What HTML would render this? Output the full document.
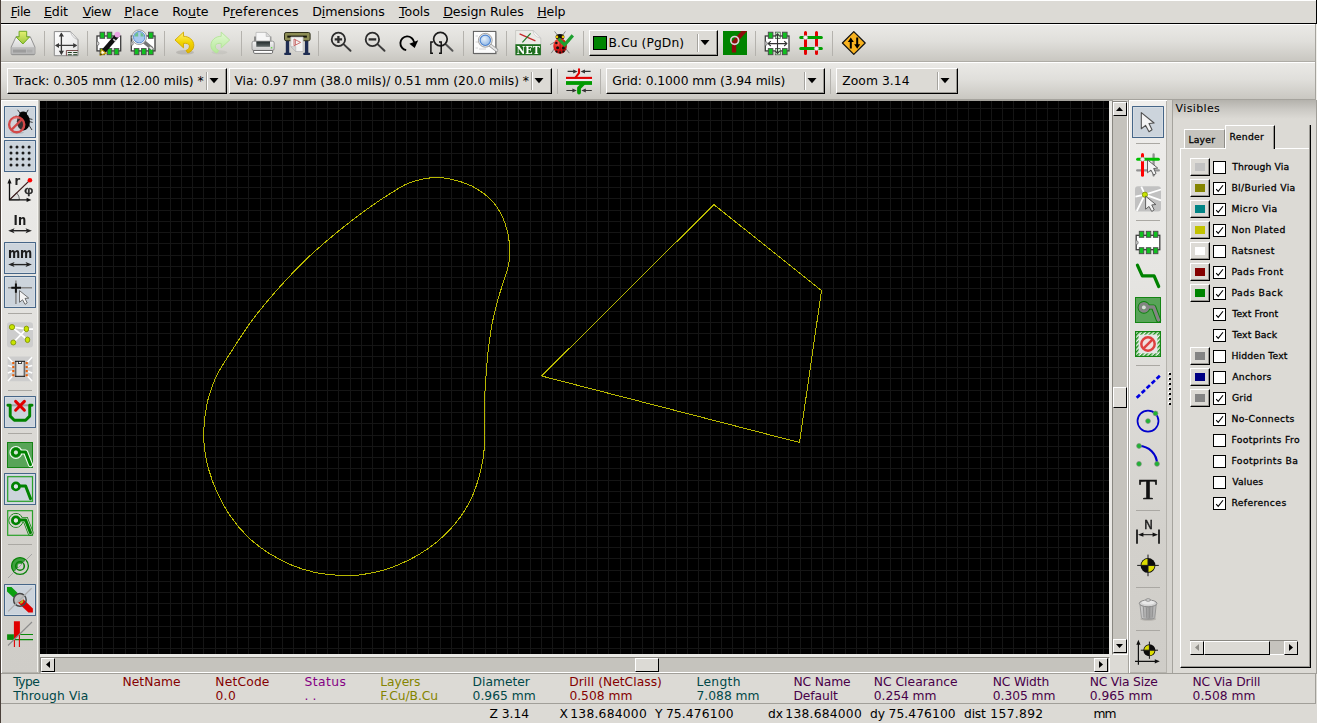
<!DOCTYPE html>
<html><head><meta charset="utf-8"><title>Pcbnew</title>
<style>
html,body{margin:0;padding:0}
body{width:1317px;height:723px;overflow:hidden;background:#dcdad5;position:relative;
 font-family:"DejaVu Sans","Liberation Sans",sans-serif;font-size:12px;color:#000}
div{position:absolute;box-sizing:border-box}
svg{position:absolute;overflow:visible}
.t{white-space:pre;line-height:1;}
.btn{background:#dcdad5;border-top:1px solid #fff;border-left:1px solid #fff;border-right:1px solid #000;border-bottom:1px solid #000}
.tog{background:#ccd4dc;border:1px solid #466688;border-radius:0.6px;box-shadow:inset 0 0 0 1px #d5dce3}
.sep{background:#b0aea9}
u{text-decoration:underline}
</style></head>
<body>
<div style="left:0px;top:0px;width:1317px;height:1px;background:#fff"></div>
<div style="left:0px;top:23px;width:1317px;height:1px;background:#000"></div>
<div style="left:1316px;top:0px;width:1px;height:24px;background:#000"></div>
<div style="left:1px;top:24px;width:1314px;height:1px;background:#fff"></div>
<div style="left:1px;top:25px;width:1314px;height:36px;background:linear-gradient(#eae9e6,#e0dfdb 45%,#c9c7c1)"></div>
<div style="left:1px;top:61px;width:1314px;height:1px;background:#aeaca6"></div>
<div style="left:1px;top:62px;width:1314px;height:1px;background:#fff"></div>
<div style="left:1px;top:63px;width:1314px;height:36px;background:linear-gradient(#eae9e6,#e0dfdb 45%,#c9c7c1)"></div>
<div style="left:1px;top:99px;width:1314px;height:1px;background:#a5a39d"></div>
<div style="left:1315px;top:24px;width:1px;height:76px;background:#a5a39d"></div>
<div style="left:1316px;top:24px;width:1px;height:76px;background:#efeeea"></div>
<div style="left:1px;top:100px;width:37px;height:1px;background:#fff"></div>
<div style="left:1px;top:101px;width:1px;height:572px;background:#fff"></div>
<div style="left:2px;top:101px;width:35px;height:571px;background:linear-gradient(#efeeec,#e6e5e2 30%,#d3d1cc 75%,#cfcdc8)"></div>
<div style="left:37px;top:101px;width:1px;height:571px;background:#f3f2ee"></div>
<div style="left:2px;top:672px;width:36px;height:1px;background:#b5b3ad"></div>
<div style="left:38px;top:100px;width:1px;height:573px;background:#c2c0ba"></div>
<div style="left:39px;top:100px;width:1px;height:573px;background:#a19f99"></div>
<div style="left:39px;top:100px;width:1074px;height:1px;background:#a5a39d"></div>
<div style="left:1109px;top:101px;width:3px;height:556px;background:#e9e8e4"></div>
<div style="left:40px;top:654px;width:1072px;height:3px;background:#e9e8e4"></div>
<div style="left:1112px;top:101px;width:16px;height:554px;background:#c5c3bd;border-left:1px solid #8a8882;border-top:1px solid #8a8882;border-right:1px solid #fff;border-bottom:1px solid #fff"></div>
<div class="btn" style="left:1113px;top:102px;width:14px;height:14px;"></div>
<div class="btn" style="left:1113px;top:639px;width:14px;height:14px;"></div>
<div class="btn" style="left:1113px;top:387px;width:14px;height:21px;"></div>
<svg style="left:1113px;top:102px" width="14" height="14"><path d="M3 9 L6.5 5 L10 9Z" fill="#000"/></svg>
<svg style="left:1113px;top:639px" width="14" height="14"><path d="M3 5 L6.5 9 L10 5Z" fill="#000"/></svg>
<div style="left:40px;top:657px;width:1070px;height:16px;background:#c5c3bd;border-left:1px solid #8a8882;border-top:1px solid #8a8882;border-right:1px solid #fff;border-bottom:1px solid #fff"></div>
<div class="btn" style="left:41px;top:658px;width:14px;height:14px;"></div>
<div class="btn" style="left:1094px;top:658px;width:14px;height:14px;"></div>
<div class="btn" style="left:635px;top:658px;width:24px;height:14px;"></div>
<svg style="left:41px;top:658px" width="14" height="14"><path d="M9 3 L5 6.5 L9 10Z" fill="#000"/></svg>
<svg style="left:1094px;top:658px" width="14" height="14"><path d="M5 3 L9 6.5 L5 10Z" fill="#000"/></svg>
<div style="left:1110px;top:655px;width:19px;height:18px;background:#dcdad5"></div>
<div style="left:1128px;top:100px;width:1px;height:573px;background:#a5a39d"></div>
<div style="left:1129px;top:100px;width:38px;height:1px;background:#fff"></div>
<div style="left:1129px;top:101px;width:1px;height:572px;background:#fff"></div>
<div style="left:1130px;top:101px;width:36px;height:571px;background:linear-gradient(#efeeec,#e6e5e2 30%,#d3d1cc 75%,#cfcdc8)"></div>
<div style="left:1166px;top:101px;width:1px;height:571px;background:#b5b3ad"></div>
<div style="left:1130px;top:672px;width:37px;height:1px;background:#b5b3ad"></div>
<div style="left:1167px;top:100px;width:5px;height:573px;background:#d6d4cf"></div>
<div style="left:1172px;top:100px;width:1px;height:573px;background:#a5a39d"></div>
<div style="left:1168px;top:372px;width:2px;height:2px;background:#fff"></div>
<div style="left:1169px;top:373px;width:2px;height:2px;background:#000"></div>
<div style="left:1168px;top:377px;width:2px;height:2px;background:#fff"></div>
<div style="left:1169px;top:378px;width:2px;height:2px;background:#000"></div>
<div style="left:1168px;top:382px;width:2px;height:2px;background:#fff"></div>
<div style="left:1169px;top:383px;width:2px;height:2px;background:#000"></div>
<div style="left:1168px;top:387px;width:2px;height:2px;background:#fff"></div>
<div style="left:1169px;top:388px;width:2px;height:2px;background:#000"></div>
<div style="left:1168px;top:392px;width:2px;height:2px;background:#fff"></div>
<div style="left:1169px;top:393px;width:2px;height:2px;background:#000"></div>
<div style="left:1168px;top:397px;width:2px;height:2px;background:#fff"></div>
<div style="left:1169px;top:398px;width:2px;height:2px;background:#000"></div>
<div style="left:1168px;top:402px;width:2px;height:2px;background:#fff"></div>
<div style="left:1169px;top:403px;width:2px;height:2px;background:#000"></div>
<div style="left:1px;top:673px;width:1315px;height:1px;background:#a19f99"></div>
<div style="left:1px;top:674px;width:1315px;height:30px;background:#dcdad5;border-right:1px solid #a19f99;border-bottom:1px solid #a19f99"></div>
<div style="left:0px;top:0px;width:1px;height:723px;background:#4a403a"></div>
<div style="left:1316px;top:100px;width:1px;height:574px;background:#a19f99"></div>
<svg style="left:40px;top:101px;background:#000;overflow:hidden" width="1069" height="553" viewBox="0 0 1069 553"><path d="M6.5 0V553M17.5 0V553M28.5 0V553M40.5 0V553M51.5 0V553M62.5 0V553M73.5 0V553M85.5 0V553M96.5 0V553M107.5 0V553M118.5 0V553M130.5 0V553M141.5 0V553M152.5 0V553M163.5 0V553M175.5 0V553M186.5 0V553M197.5 0V553M208.5 0V553M220.5 0V553M231.5 0V553M242.5 0V553M253.5 0V553M265.5 0V553M276.5 0V553M287.5 0V553M298.5 0V553M310.5 0V553M321.5 0V553M332.5 0V553M343.5 0V553M355.5 0V553M366.5 0V553M377.5 0V553M388.5 0V553M400.5 0V553M411.5 0V553M422.5 0V553M433.5 0V553M445.5 0V553M456.5 0V553M467.5 0V553M478.5 0V553M490.5 0V553M501.5 0V553M512.5 0V553M523.5 0V553M535.5 0V553M546.5 0V553M557.5 0V553M568.5 0V553M580.5 0V553M591.5 0V553M602.5 0V553M613.5 0V553M625.5 0V553M636.5 0V553M647.5 0V553M658.5 0V553M670.5 0V553M681.5 0V553M692.5 0V553M703.5 0V553M715.5 0V553M726.5 0V553M737.5 0V553M748.5 0V553M760.5 0V553M771.5 0V553M782.5 0V553M793.5 0V553M805.5 0V553M816.5 0V553M827.5 0V553M838.5 0V553M850.5 0V553M861.5 0V553M872.5 0V553M883.5 0V553M895.5 0V553M906.5 0V553M917.5 0V553M928.5 0V553M940.5 0V553M951.5 0V553M962.5 0V553M973.5 0V553M985.5 0V553M996.5 0V553M1007.5 0V553M1018.5 0V553M1030.5 0V553M1041.5 0V553M1052.5 0V553M1063.5 0V553M0 7.5H1069M0 19.5H1069M0 30.5H1069M0 41.5H1069M0 52.5H1069M0 64.5H1069M0 75.5H1069M0 86.5H1069M0 97.5H1069M0 109.5H1069M0 120.5H1069M0 131.5H1069M0 142.5H1069M0 154.5H1069M0 165.5H1069M0 176.5H1069M0 187.5H1069M0 199.5H1069M0 210.5H1069M0 221.5H1069M0 232.5H1069M0 244.5H1069M0 255.5H1069M0 266.5H1069M0 277.5H1069M0 289.5H1069M0 300.5H1069M0 311.5H1069M0 322.5H1069M0 334.5H1069M0 345.5H1069M0 356.5H1069M0 367.5H1069M0 379.5H1069M0 390.5H1069M0 401.5H1069M0 412.5H1069M0 424.5H1069M0 435.5H1069M0 446.5H1069M0 457.5H1069M0 469.5H1069M0 480.5H1069M0 491.5H1069M0 502.5H1069M0 514.5H1069M0 525.5H1069M0 536.5H1069M0 547.5H1069" stroke="#151515" stroke-width="1" fill="none" shape-rendering="crispEdges"/><polygon points="673.9,103.6 781.5,189.6 759.5,341.5 501.6,275.0" fill="none" stroke="#b8b800" stroke-width="1" shape-rendering="crispEdges"/><path d="M396.8 76.5C405.5 76.5 415.6 79.1 422.9 81.4C430.2 83.7 435.1 86.5 440.4 90.1C445.7 93.7 450.8 97.9 454.9 103.2C459.0 108.5 462.6 115.6 465.0 122.1C467.4 128.6 468.8 135.6 469.4 142.4C470.0 149.2 469.8 156.4 468.8 162.7C467.8 169.0 465.4 174.1 463.6 180.1C461.8 186.2 459.7 192.2 457.8 199.0C455.9 205.8 454.1 212.8 452.5 220.8C450.9 228.8 449.6 238.2 448.5 246.9C447.4 255.6 446.8 264.5 446.2 273.0C445.6 281.5 444.9 287.5 444.7 298.0C444.4 308.5 444.9 326.1 444.7 335.8C444.5 345.5 444.3 349.3 443.3 356.1C442.3 362.9 440.8 369.6 438.9 376.4C436.9 383.2 434.8 390.1 431.6 396.8C428.5 403.5 424.4 410.3 420.0 416.4C415.6 422.5 410.8 428.0 405.5 433.2C400.2 438.4 394.4 443.2 388.1 447.6C381.8 452.0 375.1 456.1 367.8 459.6C360.5 463.1 352.2 466.5 344.5 468.9C336.8 471.2 327.1 472.8 321.3 473.7C315.6 474.6 313.9 474.3 310.0 474.4C306.1 474.5 303.9 474.8 298.0 474.3C292.1 473.8 282.6 473.1 274.9 471.4C267.2 469.7 259.4 467.4 251.6 464.1C243.9 460.9 235.7 456.6 228.4 451.9C221.1 447.2 214.3 442.0 208.0 436.0C201.7 430.0 195.8 422.9 190.7 415.6C185.6 408.3 181.2 400.1 177.6 392.4C174.0 384.7 171.1 376.7 168.9 369.2C166.7 361.7 165.3 354.4 164.5 347.4C163.7 340.4 163.5 334.3 163.9 327.0C164.3 319.7 165.5 310.6 166.8 303.8C168.1 297.0 169.9 291.8 171.8 286.4C173.7 281.0 174.7 278.1 178.3 271.5C181.9 264.9 188.2 255.3 193.6 246.9C199.0 238.4 205.2 228.8 211.0 220.8C216.8 212.8 222.6 205.9 228.4 199.0C234.2 192.1 239.5 186.1 245.8 179.3C252.1 172.5 259.3 164.9 266.1 158.4C272.9 151.9 279.7 145.9 286.5 140.1C293.3 134.3 299.6 129.2 306.8 123.5C314.1 117.8 322.2 111.6 330.0 106.1C337.8 100.6 346.5 94.8 353.3 90.7C360.1 86.6 363.4 83.8 370.7 81.4C377.9 79.0 388.1 76.5 396.8 76.5Z" fill="none" stroke="#b8b800" stroke-width="1" shape-rendering="crispEdges"/></svg>
<svg width="0" height="0" style="left:0;top:0"><defs>
<linearGradient id="gDisk" x1="0" y1="0" x2="0" y2="1"><stop offset="0" stop-color="#f4f4f4"/><stop offset="1" stop-color="#c4c4c4"/></linearGradient>
<linearGradient id="gArr" x1="0" y1="0" x2="0" y2="1"><stop offset="0" stop-color="#e4f070"/><stop offset="1" stop-color="#9cc83c"/></linearGradient>
<linearGradient id="gUndo" x1="0" y1="0" x2="0" y2="1"><stop offset="0" stop-color="#fff27a"/><stop offset="0.5" stop-color="#f2d400"/><stop offset="1" stop-color="#e0b400"/></linearGradient>
<linearGradient id="gRedo" x1="0" y1="0" x2="0" y2="1"><stop offset="0" stop-color="#e2f8d4"/><stop offset="1" stop-color="#b4e898"/></linearGradient>
<linearGradient id="gPage" x1="0" y1="0" x2="1" y2="1"><stop offset="0" stop-color="#ffffff"/><stop offset="1" stop-color="#e4e4e4"/></linearGradient>
<radialGradient id="gLens" cx="0.4" cy="0.35" r="0.7"><stop offset="0" stop-color="#e8f2fc"/><stop offset="1" stop-color="#8cb4e4"/></radialGradient>
<radialGradient id="gBug" cx="0.35" cy="0.3" r="0.8"><stop offset="0" stop-color="#ff6050"/><stop offset="0.5" stop-color="#e01818"/><stop offset="1" stop-color="#900808"/></radialGradient>
<linearGradient id="gPrn" x1="0" y1="0" x2="0" y2="1"><stop offset="0" stop-color="#f6f6f6"/><stop offset="1" stop-color="#c8c8c8"/></linearGradient>
<linearGradient id="gSlot" x1="0" y1="0" x2="0" y2="1"><stop offset="0" stop-color="#20282a"/><stop offset="1" stop-color="#606868"/></linearGradient>
<linearGradient id="gCan" x1="0" y1="0" x2="1" y2="0"><stop offset="0" stop-color="#d4d4d4"/><stop offset="0.55" stop-color="#9a9a9a"/><stop offset="1" stop-color="#c2c2c2"/></linearGradient>
</defs></svg>
<div style="left:7px;top:68px;width:220px;height:26px;background:#dcdad5;border-top:1px solid #fff;border-left:1px solid #fff;border-right:1px solid #000;border-bottom:1px solid #000;box-shadow:inset -1px -1px 0 #9a9893"></div>
<div style="left:206px;top:72px;width:1px;height:18px;background:#a5a39e"></div>
<div style="left:207px;top:72px;width:1px;height:18px;background:#fff"></div>
<svg style="left:209px;top:78px" width="10" height="6"><path d="M0.5 0 H9.5 L5 5.2Z" fill="#000"/></svg>
<div style="left:229px;top:68px;width:323px;height:26px;background:#dcdad5;border-top:1px solid #fff;border-left:1px solid #fff;border-right:1px solid #000;border-bottom:1px solid #000;box-shadow:inset -1px -1px 0 #9a9893"></div>
<div style="left:531px;top:72px;width:1px;height:18px;background:#a5a39e"></div>
<div style="left:532px;top:72px;width:1px;height:18px;background:#fff"></div>
<svg style="left:534px;top:78px" width="10" height="6"><path d="M0.5 0 H9.5 L5 5.2Z" fill="#000"/></svg>
<div style="left:589px;top:30px;width:129px;height:26px;background:#dcdad5;border-top:1px solid #fff;border-left:1px solid #fff;border-right:1px solid #000;border-bottom:1px solid #000;box-shadow:inset -1px -1px 0 #9a9893"></div>
<div style="left:697px;top:34px;width:1px;height:18px;background:#a5a39e"></div>
<div style="left:698px;top:34px;width:1px;height:18px;background:#fff"></div>
<svg style="left:700px;top:40px" width="10" height="6"><path d="M0.5 0 H9.5 L5 5.2Z" fill="#000"/></svg>
<div style="left:606px;top:68px;width:219px;height:26px;background:#dcdad5;border-top:1px solid #fff;border-left:1px solid #fff;border-right:1px solid #000;border-bottom:1px solid #000;box-shadow:inset -1px -1px 0 #9a9893"></div>
<div style="left:804px;top:72px;width:1px;height:18px;background:#a5a39e"></div>
<div style="left:805px;top:72px;width:1px;height:18px;background:#fff"></div>
<svg style="left:807px;top:78px" width="10" height="6"><path d="M0.5 0 H9.5 L5 5.2Z" fill="#000"/></svg>
<div style="left:836px;top:68px;width:122px;height:26px;background:#dcdad5;border-top:1px solid #fff;border-left:1px solid #fff;border-right:1px solid #000;border-bottom:1px solid #000;box-shadow:inset -1px -1px 0 #9a9893"></div>
<div style="left:937px;top:72px;width:1px;height:18px;background:#a5a39e"></div>
<div style="left:938px;top:72px;width:1px;height:18px;background:#fff"></div>
<svg style="left:940px;top:78px" width="10" height="6"><path d="M0.5 0 H9.5 L5 5.2Z" fill="#000"/></svg>
<div style="left:593px;top:36px;width:14px;height:14px;background:#008400;border:1px solid #000"></div>
<div style="left:44px;top:31px;width:1px;height:25px;background:#b4b2ad"></div>
<div style="left:87px;top:31px;width:1px;height:25px;background:#b4b2ad"></div>
<div style="left:164px;top:31px;width:1px;height:25px;background:#b4b2ad"></div>
<div style="left:241px;top:31px;width:1px;height:25px;background:#b4b2ad"></div>
<div style="left:318px;top:31px;width:1px;height:25px;background:#b4b2ad"></div>
<div style="left:463px;top:31px;width:1px;height:25px;background:#b4b2ad"></div>
<div style="left:506px;top:31px;width:1px;height:25px;background:#b4b2ad"></div>
<div style="left:583px;top:31px;width:1px;height:25px;background:#b4b2ad"></div>
<div style="left:755px;top:31px;width:1px;height:25px;background:#b4b2ad"></div>
<div style="left:832px;top:31px;width:1px;height:25px;background:#b4b2ad"></div>
<div style="left:557px;top:69px;width:1px;height:25px;background:#b4b2ad"></div>
<div style="left:600px;top:69px;width:1px;height:25px;background:#b4b2ad"></div>
<div style="left:830px;top:69px;width:1px;height:25px;background:#b4b2ad"></div>
<div style="left:1173px;top:100px;width:143px;height:19px;background:linear-gradient(#b4b2ac,#cbc9c4 50%,#dcdad5)"></div>
<div style="left:1180px;top:148px;width:131px;height:520px;background:#dcdad5;border-left:1px solid #fff;border-top:1px solid #fff;border-right:1px solid #000;border-bottom:1px solid #000;box-shadow:inset -1px -1px 0 #9a9893"></div>
<div style="left:1310px;top:125px;width:1px;height:24px;background:#000"></div>
<div style="left:1309px;top:125px;width:1px;height:24px;background:#9a9893"></div>
<div style="left:1184px;top:129px;width:41px;height:19px;background:#c5c3bd;border-left:1px solid #fff;border-top:1px solid #fff;border-right:1px solid #8f8d88"></div>
<div style="left:1225px;top:125px;width:50px;height:24px;background:#dcdad5;border-left:1px solid #fff;border-top:1px solid #fff;border-right:1px solid #000;box-shadow:inset -1px 0 0 #9a9893"></div>
<div style="left:1190px;top:158px;width:20px;height:18px;background:#dcdad5;border-left:1px solid #fff;border-top:1px solid #fff;border-right:1px solid #000;border-bottom:1px solid #000;box-shadow:inset -1px -1px 0 #9a9893"></div>
<div style="left:1195px;top:163px;width:10px;height:8px;background:#c2c2c2"></div>
<div style="left:1213px;top:161px;width:13px;height:13px;background:#fff;border:1px solid #000"></div>
<div style="left:1190px;top:179px;width:20px;height:18px;background:#dcdad5;border-left:1px solid #fff;border-top:1px solid #fff;border-right:1px solid #000;border-bottom:1px solid #000;box-shadow:inset -1px -1px 0 #9a9893"></div>
<div style="left:1195px;top:184px;width:10px;height:8px;background:#848400"></div>
<div style="left:1213px;top:182px;width:13px;height:13px;background:#fff;border:1px solid #000"></div>
<svg style="left:1213px;top:182px" width="13" height="13"><path d="M3.2 7.2 L5.2 9.4 L10 3.2" fill="none" stroke="#000" stroke-width="1.05"/></svg>
<div style="left:1190px;top:200px;width:20px;height:18px;background:#dcdad5;border-left:1px solid #fff;border-top:1px solid #fff;border-right:1px solid #000;border-bottom:1px solid #000;box-shadow:inset -1px -1px 0 #9a9893"></div>
<div style="left:1195px;top:205px;width:10px;height:8px;background:#008484"></div>
<div style="left:1213px;top:203px;width:13px;height:13px;background:#fff;border:1px solid #000"></div>
<svg style="left:1213px;top:203px" width="13" height="13"><path d="M3.2 7.2 L5.2 9.4 L10 3.2" fill="none" stroke="#000" stroke-width="1.05"/></svg>
<div style="left:1190px;top:221px;width:20px;height:18px;background:#dcdad5;border-left:1px solid #fff;border-top:1px solid #fff;border-right:1px solid #000;border-bottom:1px solid #000;box-shadow:inset -1px -1px 0 #9a9893"></div>
<div style="left:1195px;top:226px;width:10px;height:8px;background:#c2c200"></div>
<div style="left:1213px;top:224px;width:13px;height:13px;background:#fff;border:1px solid #000"></div>
<svg style="left:1213px;top:224px" width="13" height="13"><path d="M3.2 7.2 L5.2 9.4 L10 3.2" fill="none" stroke="#000" stroke-width="1.05"/></svg>
<div style="left:1190px;top:242px;width:20px;height:18px;background:#dcdad5;border-left:1px solid #fff;border-top:1px solid #fff;border-right:1px solid #000;border-bottom:1px solid #000;box-shadow:inset -1px -1px 0 #9a9893"></div>
<div style="left:1195px;top:247px;width:10px;height:8px;background:#ffffff"></div>
<div style="left:1213px;top:245px;width:13px;height:13px;background:#fff;border:1px solid #000"></div>
<div style="left:1190px;top:263px;width:20px;height:18px;background:#dcdad5;border-left:1px solid #fff;border-top:1px solid #fff;border-right:1px solid #000;border-bottom:1px solid #000;box-shadow:inset -1px -1px 0 #9a9893"></div>
<div style="left:1195px;top:268px;width:10px;height:8px;background:#840000"></div>
<div style="left:1213px;top:266px;width:13px;height:13px;background:#fff;border:1px solid #000"></div>
<svg style="left:1213px;top:266px" width="13" height="13"><path d="M3.2 7.2 L5.2 9.4 L10 3.2" fill="none" stroke="#000" stroke-width="1.05"/></svg>
<div style="left:1190px;top:284px;width:20px;height:18px;background:#dcdad5;border-left:1px solid #fff;border-top:1px solid #fff;border-right:1px solid #000;border-bottom:1px solid #000;box-shadow:inset -1px -1px 0 #9a9893"></div>
<div style="left:1195px;top:289px;width:10px;height:8px;background:#008400"></div>
<div style="left:1213px;top:287px;width:13px;height:13px;background:#fff;border:1px solid #000"></div>
<svg style="left:1213px;top:287px" width="13" height="13"><path d="M3.2 7.2 L5.2 9.4 L10 3.2" fill="none" stroke="#000" stroke-width="1.05"/></svg>
<div style="left:1213px;top:308px;width:13px;height:13px;background:#fff;border:1px solid #000"></div>
<svg style="left:1213px;top:308px" width="13" height="13"><path d="M3.2 7.2 L5.2 9.4 L10 3.2" fill="none" stroke="#000" stroke-width="1.05"/></svg>
<div style="left:1213px;top:329px;width:13px;height:13px;background:#fff;border:1px solid #000"></div>
<svg style="left:1213px;top:329px" width="13" height="13"><path d="M3.2 7.2 L5.2 9.4 L10 3.2" fill="none" stroke="#000" stroke-width="1.05"/></svg>
<div style="left:1190px;top:347px;width:20px;height:18px;background:#dcdad5;border-left:1px solid #fff;border-top:1px solid #fff;border-right:1px solid #000;border-bottom:1px solid #000;box-shadow:inset -1px -1px 0 #9a9893"></div>
<div style="left:1195px;top:352px;width:10px;height:8px;background:#848484"></div>
<div style="left:1213px;top:350px;width:13px;height:13px;background:#fff;border:1px solid #000"></div>
<div style="left:1190px;top:368px;width:20px;height:18px;background:#dcdad5;border-left:1px solid #fff;border-top:1px solid #fff;border-right:1px solid #000;border-bottom:1px solid #000;box-shadow:inset -1px -1px 0 #9a9893"></div>
<div style="left:1195px;top:373px;width:10px;height:8px;background:#000084"></div>
<div style="left:1213px;top:371px;width:13px;height:13px;background:#fff;border:1px solid #000"></div>
<div style="left:1190px;top:389px;width:20px;height:18px;background:#dcdad5;border-left:1px solid #fff;border-top:1px solid #fff;border-right:1px solid #000;border-bottom:1px solid #000;box-shadow:inset -1px -1px 0 #9a9893"></div>
<div style="left:1195px;top:394px;width:10px;height:8px;background:#848484"></div>
<div style="left:1213px;top:392px;width:13px;height:13px;background:#fff;border:1px solid #000"></div>
<svg style="left:1213px;top:392px" width="13" height="13"><path d="M3.2 7.2 L5.2 9.4 L10 3.2" fill="none" stroke="#000" stroke-width="1.05"/></svg>
<div style="left:1213px;top:413px;width:13px;height:13px;background:#fff;border:1px solid #000"></div>
<svg style="left:1213px;top:413px" width="13" height="13"><path d="M3.2 7.2 L5.2 9.4 L10 3.2" fill="none" stroke="#000" stroke-width="1.05"/></svg>
<div style="left:1213px;top:434px;width:13px;height:13px;background:#fff;border:1px solid #000"></div>
<div style="left:1213px;top:455px;width:13px;height:13px;background:#fff;border:1px solid #000"></div>
<div style="left:1213px;top:476px;width:13px;height:13px;background:#fff;border:1px solid #000"></div>
<div style="left:1213px;top:497px;width:13px;height:13px;background:#fff;border:1px solid #000"></div>
<svg style="left:1213px;top:497px" width="13" height="13"><path d="M3.2 7.2 L5.2 9.4 L10 3.2" fill="none" stroke="#000" stroke-width="1.05"/></svg>
<div style="left:1190px;top:640px;width:108px;height:15px;background:#c5c3bd;border-top:1px solid #8a8882;border-left:1px solid #8a8882;border-bottom:1px solid #fff;border-right:1px solid #fff"></div>
<div class="btn" style="left:1190px;top:641px;width:14px;height:14px;"></div>
<div class="btn" style="left:1284px;top:641px;width:14px;height:14px;"></div>
<div class="btn" style="left:1204px;top:641px;width:66px;height:14px;"></div>
<svg style="left:1190px;top:641px" width="14" height="14"><path d="M9 3 L5 6.5 L9 10Z" fill="#8f8d88"/></svg>
<svg style="left:1284px;top:641px" width="14" height="14"><path d="M5 3 L9 6.5 L5 10Z" fill="#000"/></svg>
<div class="tog" style="left:4px;top:106px;width:32px;height:32px;"></div>
<div class="tog" style="left:4px;top:140px;width:32px;height:32px;"></div>
<div class="tog" style="left:4px;top:242px;width:32px;height:32px;"></div>
<div class="tog" style="left:4px;top:276px;width:32px;height:32px;"></div>
<div class="tog" style="left:4px;top:396px;width:32px;height:32px;"></div>
<div class="tog" style="left:4px;top:473px;width:32px;height:32px;"></div>
<div class="tog" style="left:4px;top:584px;width:32px;height:32px;"></div>
<div style="left:8px;top:313px;width:24px;height:1px;background:#aaa8a3"></div>
<div style="left:8px;top:390px;width:24px;height:1px;background:#aaa8a3"></div>
<div style="left:8px;top:433px;width:24px;height:1px;background:#aaa8a3"></div>
<div style="left:8px;top:544px;width:24px;height:1px;background:#aaa8a3"></div>
<div class="tog" style="left:1132px;top:106px;width:32px;height:32px;"></div>
<div style="left:1136px;top:143px;width:24px;height:1px;background:#aaa8a3"></div>
<div style="left:1136px;top:220px;width:24px;height:1px;background:#aaa8a3"></div>
<div style="left:1136px;top:365px;width:24px;height:1px;background:#aaa8a3"></div>
<div style="left:1136px;top:510px;width:24px;height:1px;background:#aaa8a3"></div>
<div style="left:1136px;top:587px;width:24px;height:1px;background:#aaa8a3"></div>
<div style="left:1136px;top:630px;width:24px;height:1px;background:#aaa8a3"></div>
<div class="t" style="left:10.70px;top:6.34px;font-size:12.6px;color:#000;letter-spacing:-0.307px;"><u>F</u>ile</div>
<div class="t" style="left:44.00px;top:6.34px;font-size:12.6px;color:#000;letter-spacing:-0.115px;"><u>E</u>dit</div>
<div class="t" style="left:82.73px;top:6.34px;font-size:12.6px;color:#000;letter-spacing:-0.360px;"><u>V</u>iew</div>
<div class="t" style="left:124.19px;top:6.34px;font-size:12.6px;color:#000;letter-spacing:0.276px;"><u>P</u>lace</div>
<div class="t" style="left:172.20px;top:6.34px;font-size:12.6px;color:#000;letter-spacing:-0.049px;">Ro<u>u</u>te</div>
<div class="t" style="left:222.40px;top:6.34px;font-size:12.6px;color:#000;letter-spacing:0.214px;">P<u>r</u>eferences</div>
<div class="t" style="left:312.29px;top:6.34px;font-size:12.6px;color:#000;letter-spacing:-0.122px;">D<u>i</u>mensions</div>
<div class="t" style="left:398.90px;top:6.34px;font-size:12.6px;color:#000;letter-spacing:-0.016px;"><u>T</u>ools</div>
<div class="t" style="left:443.19px;top:6.34px;font-size:12.6px;color:#000;letter-spacing:-0.081px;"><u>D</u>esign Rules</div>
<div class="t" style="left:537.19px;top:6.34px;font-size:12.6px;color:#000;letter-spacing:-0.098px;"><u>H</u>elp</div>
<div class="t" style="left:13.20px;top:74.59px;font-size:12.3px;color:#000;letter-spacing:-0.024px;">Track: 0.305 mm (12.00 mils) *</div>
<div class="t" style="left:234.42px;top:74.59px;font-size:12.3px;color:#000;letter-spacing:-0.026px;">Via: 0.97 mm (38.0 mils)/ 0.51 mm (20.0 mils) *</div>
<div class="t" style="left:608.61px;top:36.59px;font-size:12.3px;color:#000;letter-spacing:0.075px;">B.Cu (PgDn)</div>
<div class="t" style="left:612.26px;top:74.59px;font-size:12.3px;color:#000;letter-spacing:-0.062px;">Grid: 0.1000 mm (3.94 mils)</div>
<div class="t" style="left:842.24px;top:74.59px;font-size:12.3px;color:#000;letter-spacing:0.064px;">Zoom 3.14</div>
<div class="t" style="left:13.20px;top:675.59px;font-size:12.3px;color:#004848;letter-spacing:-0.497px;">Type</div>
<div class="t" style="left:13.20px;top:689.59px;font-size:12.3px;color:#004848;letter-spacing:0.100px;">Through Via</div>
<div class="t" style="left:122.51px;top:675.59px;font-size:12.3px;color:#840000;letter-spacing:0.037px;">NetName</div>
<div class="t" style="left:215.31px;top:675.59px;font-size:12.3px;color:#840000;letter-spacing:0.179px;">NetCode</div>
<div class="t" style="left:215.40px;top:689.59px;font-size:12.3px;color:#840000;letter-spacing:0.382px;">0.0</div>
<div class="t" style="left:304.60px;top:675.59px;font-size:12.3px;color:#840084;letter-spacing:0.404px;">Status</div>
<div class="t" style="left:304.39px;top:689.59px;font-size:12.3px;color:#840084;letter-spacing:0.185px;">. .</div>
<div class="t" style="left:380.31px;top:675.59px;font-size:12.3px;color:#848400;letter-spacing:-0.102px;">Layers</div>
<div class="t" style="left:380.31px;top:689.59px;font-size:12.3px;color:#848400;letter-spacing:-0.048px;">F.Cu/B.Cu</div>
<div class="t" style="left:472.51px;top:675.59px;font-size:12.3px;color:#004848;">Diameter</div>
<div class="t" style="left:472.60px;top:689.59px;font-size:12.3px;color:#004848;">0.965 mm</div>
<div class="t" style="left:569.31px;top:675.59px;font-size:12.3px;color:#840000;letter-spacing:0.025px;">Drill (NetClass)</div>
<div class="t" style="left:569.40px;top:689.59px;font-size:12.3px;color:#840000;">0.508 mm</div>
<div class="t" style="left:696.41px;top:675.59px;font-size:12.3px;color:#004848;letter-spacing:0.348px;">Length</div>
<div class="t" style="left:696.50px;top:689.59px;font-size:12.3px;color:#004848;">7.088 mm</div>
<div class="t" style="left:793.51px;top:675.59px;font-size:12.3px;color:#480048;letter-spacing:-0.154px;">NC Name</div>
<div class="t" style="left:793.51px;top:689.59px;font-size:12.3px;color:#480048;letter-spacing:-0.098px;">Default</div>
<div class="t" style="left:873.71px;top:675.59px;font-size:12.3px;color:#480048;letter-spacing:0.035px;">NC Clearance</div>
<div class="t" style="left:873.80px;top:689.59px;font-size:12.3px;color:#480048;letter-spacing:-0.057px;">0.254 mm</div>
<div class="t" style="left:992.71px;top:675.59px;font-size:12.3px;color:#480048;letter-spacing:-0.120px;">NC Width</div>
<div class="t" style="left:992.80px;top:689.59px;font-size:12.3px;color:#480048;letter-spacing:-0.057px;">0.305 mm</div>
<div class="t" style="left:1089.71px;top:675.59px;font-size:12.3px;color:#480048;letter-spacing:-0.188px;">NC Via Size</div>
<div class="t" style="left:1089.80px;top:689.59px;font-size:12.3px;color:#480048;letter-spacing:-0.071px;">0.965 mm</div>
<div class="t" style="left:1192.51px;top:675.59px;font-size:12.3px;color:#480048;letter-spacing:-0.143px;">NC Via Drill</div>
<div class="t" style="left:1192.60px;top:689.59px;font-size:12.3px;color:#480048;letter-spacing:-0.029px;">0.508 mm</div>
<div class="t" style="left:489.54px;top:707.59px;font-size:12.3px;color:#000;letter-spacing:-0.038px;">Z 3.14</div>
<div class="t" style="left:559.40px;top:707.59px;font-size:12.3px;color:#000;">X</div>
<div class="t" style="left:570.25px;top:707.59px;font-size:12.3px;color:#000;letter-spacing:0.242px;">138.684000</div>
<div class="t" style="left:654.99px;top:707.59px;font-size:12.3px;color:#000;">Y</div>
<div class="t" style="left:665.90px;top:707.59px;font-size:12.3px;color:#000;letter-spacing:0.133px;">75.476100</div>
<div class="t" style="left:768.07px;top:707.59px;font-size:12.3px;color:#000;">dx</div>
<div class="t" style="left:785.34px;top:707.59px;font-size:12.3px;color:#000;letter-spacing:0.231px;">138.684000</div>
<div class="t" style="left:869.97px;top:707.59px;font-size:12.3px;color:#000;">dy</div>
<div class="t" style="left:888.50px;top:707.59px;font-size:12.3px;color:#000;letter-spacing:0.083px;">75.476100</div>
<div class="t" style="left:964.07px;top:707.59px;font-size:12.3px;color:#000;letter-spacing:-0.218px;">dist</div>
<div class="t" style="left:990.34px;top:707.59px;font-size:12.3px;color:#000;letter-spacing:0.335px;">157.892</div>
<div class="t" style="left:1093.50px;top:707.59px;font-size:12.3px;color:#000;letter-spacing:-1.100px;">mm</div>
<div class="t" style="left:1175.62px;top:102.69px;font-size:11px;color:#000;letter-spacing:0.351px;">Visibles</div>
<div class="t" style="left:1188.40px;top:135.17px;font-size:9.25px;color:#000;letter-spacing:0.196px;-webkit-text-stroke:0.27px #000;">Layer</div>
<div class="t" style="left:1229.50px;top:132.17px;font-size:9.25px;color:#000;letter-spacing:0.296px;-webkit-text-stroke:0.27px #000;">Render</div>
<div class="t" style="left:1232.27px;top:162.17px;font-size:9.25px;color:#000;letter-spacing:0.119px;-webkit-text-stroke:0.27px #000;">Through Via</div>
<div class="t" style="left:1231.40px;top:183.17px;font-size:9.25px;color:#000;letter-spacing:0.368px;-webkit-text-stroke:0.27px #000;">Bl/Buried Via</div>
<div class="t" style="left:1231.40px;top:204.17px;font-size:9.25px;color:#000;letter-spacing:0.446px;-webkit-text-stroke:0.27px #000;">Micro Via</div>
<div class="t" style="left:1231.40px;top:225.17px;font-size:9.25px;color:#000;letter-spacing:0.393px;-webkit-text-stroke:0.27px #000;">Non Plated</div>
<div class="t" style="left:1231.40px;top:246.17px;font-size:9.25px;color:#000;letter-spacing:0.376px;-webkit-text-stroke:0.27px #000;">Ratsnest</div>
<div class="t" style="left:1231.40px;top:267.17px;font-size:9.25px;color:#000;letter-spacing:0.428px;-webkit-text-stroke:0.27px #000;">Pads Front</div>
<div class="t" style="left:1231.40px;top:288.17px;font-size:9.25px;color:#000;letter-spacing:0.532px;-webkit-text-stroke:0.27px #000;">Pads Back</div>
<div class="t" style="left:1232.27px;top:309.17px;font-size:9.25px;color:#000;letter-spacing:0.098px;-webkit-text-stroke:0.27px #000;">Text Front</div>
<div class="t" style="left:1232.27px;top:330.17px;font-size:9.25px;color:#000;letter-spacing:0.098px;-webkit-text-stroke:0.27px #000;">Text Back</div>
<div class="t" style="left:1231.40px;top:351.17px;font-size:9.25px;color:#000;letter-spacing:0.163px;-webkit-text-stroke:0.27px #000;">Hidden Text</div>
<div class="t" style="left:1232.18px;top:372.17px;font-size:9.25px;color:#000;letter-spacing:0.306px;-webkit-text-stroke:0.27px #000;">Anchors</div>
<div class="t" style="left:1231.94px;top:393.17px;font-size:9.25px;color:#000;letter-spacing:0.235px;-webkit-text-stroke:0.27px #000;">Grid</div>
<div class="t" style="left:1231.40px;top:414.17px;font-size:9.25px;color:#000;letter-spacing:0.365px;-webkit-text-stroke:0.27px #000;">No-Connects</div>
<div class="t" style="left:1231.40px;top:435.17px;font-size:9.25px;color:#000;letter-spacing:0.379px;-webkit-text-stroke:0.27px #000;">Footprints Fro</div>
<div class="t" style="left:1231.40px;top:456.17px;font-size:9.25px;color:#000;letter-spacing:0.426px;-webkit-text-stroke:0.27px #000;">Footprints Ba</div>
<div class="t" style="left:1232.18px;top:477.17px;font-size:9.25px;color:#000;letter-spacing:0.146px;-webkit-text-stroke:0.27px #000;">Values</div>
<div class="t" style="left:1231.40px;top:498.17px;font-size:9.25px;color:#000;letter-spacing:0.379px;-webkit-text-stroke:0.27px #000;">References</div>
<svg style="left:10px;top:30px" width="26" height="26" viewBox="0 0 26 26"><path d="M6 6.8 H20.3 L24.9 17 V23.4 Q24.9 24.7 23.6 24.7 H2.5 Q1.2 24.7 1.2 23.4 V17Z" fill="url(#gDisk)" stroke="#929292" stroke-width="1"/><path d="M1.6 17.2 H24.5 V23.3 Q24.5 24.3 23.5 24.3 H2.6 Q1.6 24.3 1.6 23.3Z" fill="#bababa"/><rect x="3" y="19.6" width="13" height="3" fill="#9c9c9c"/><rect x="16.8" y="19.6" width="5.6" height="3" fill="#acacac"/><path d="M1.8 24.4 H24.3" stroke="#8e8e8e" stroke-width="0.8"/><path d="M9.1 1.3 H16.7 V6.9 H19.6 L12.9 14 L6.1 6.9 H9.1Z" fill="url(#gArr)" stroke="#6ea822" stroke-width="1"/></svg>
<svg style="left:53px;top:30px" width="26" height="26" viewBox="0 0 26 26"><path d="M1.3 1.6 H17.6 L25 9.8 V25.7 H1.3Z" fill="url(#gPage)" stroke="#8a8a8a" stroke-width="1"/><path d="M17.6 1.6 Q18.6 7.5 25 9.8Z" fill="#fff" stroke="#aaa" stroke-width="0.7"/><path d="M8.4 3.2 V24.2 M2.8 15.4 H23.4" stroke="#3a3a3a" stroke-width="1.3" fill="none"/><path d="M8.4 2.4 L5.8 6.6 H11Z M8.4 25 L5.8 20.8 H11Z M2 15.4 L6 12.9 V17.9Z M24.2 15.4 L20.2 12.9 V17.9Z" fill="#3a3a3a"/><path d="M25 20.5 H13.4 V25.7" fill="none" stroke="#6e3c3c" stroke-width="0.9"/><path d="M14.8 22.5 H18.8 M20.2 22.5 H24.4 M14.8 24.7 H18.8 M20.2 24.7 H24.4" stroke="#1e3c1e" stroke-width="1.1"/></svg>
<svg style="left:96px;top:30px" width="26" height="26" viewBox="0 0 26 26"><rect x="1.0" y="6" width="23.7" height="14.9" fill="#fff" stroke="#3c3c3c" stroke-width="1.3"/><path d="M1.0 11.5 a2 2 0 0 1 0 4" fill="#ccc" stroke="#666" stroke-width="0.7"/><rect x="4.0" y="2.2" width="4.6" height="6.1" fill="#10c020" stroke="#4a4a4a" stroke-width="0.9"/><rect x="4.0" y="18.6" width="4.6" height="6.1" fill="#10c020" stroke="#4a4a4a" stroke-width="0.9"/><rect x="11.2" y="2.2" width="4.6" height="6.1" fill="#10c020" stroke="#4a4a4a" stroke-width="0.9"/><rect x="11.2" y="18.6" width="4.6" height="6.1" fill="#10c020" stroke="#4a4a4a" stroke-width="0.9"/><rect x="18.2" y="18.6" width="4.6" height="6.1" fill="#10c020" stroke="#4a4a4a" stroke-width="0.9"/><path d="M5.6 23.6 L21 5.8" stroke="#111" stroke-width="4.6" stroke-linecap="butt"/><path d="M17.3 9.2 L19.6 11.2" stroke="#c8c8c8" stroke-width="1.6"/><circle cx="21.4" cy="4.6" r="2.9" fill="#eaa4e2"/><path d="M4.3 25.1 L5.4 19.4 L10 23.2Z" fill="#fffbe8" stroke="#c8a000" stroke-width="1.1"/><path d="M4.2 25.2 L4.7 23 L6.2 24.3Z" fill="#111"/></svg>
<svg style="left:130px;top:30px" width="26" height="26" viewBox="0 0 26 26"><rect x="1.3" y="6" width="23.7" height="14.9" fill="#fff" stroke="#3c3c3c" stroke-width="1.3"/><path d="M1.3 11.5 a2 2 0 0 1 0 4" fill="#ccc" stroke="#666" stroke-width="0.7"/><rect x="4.3" y="18.6" width="4.6" height="6.1" fill="#10c020" stroke="#4a4a4a" stroke-width="0.9"/><rect x="11.5" y="18.6" width="4.6" height="6.1" fill="#10c020" stroke="#4a4a4a" stroke-width="0.9"/><rect x="18.5" y="2.2" width="4.6" height="6.1" fill="#10c020" stroke="#4a4a4a" stroke-width="0.9"/><rect x="18.5" y="18.6" width="4.6" height="6.1" fill="#10c020" stroke="#4a4a4a" stroke-width="0.9"/><path d="M14.6 12.4 L21.6 18.2" stroke="#767676" stroke-width="3.6" stroke-linecap="round"/><path d="M20.2 17.4 L21.8 18.7" stroke="#ececec" stroke-width="1.8" stroke-linecap="round"/><circle cx="9.2" cy="7.2" r="7.3" fill="#fbfbfb" stroke="#8e8e8e" stroke-width="0.9"/><circle cx="9.2" cy="7.2" r="5.7" fill="#a8c8ee" stroke="#5a8cd0" stroke-width="1"/><path d="M4.4 6.4 A5 5 0 0 1 8.2 2.3 V6.4Z M10.6 2.4 A5 5 0 0 1 14 6.4 H10.6Z" fill="#6cc090"/></svg>
<svg style="left:173px;top:30px" width="26" height="26" viewBox="0 0 26 26"><ellipse cx="12" cy="22.3" rx="9" ry="2.3" fill="#8c8a84" opacity="0.35"/><path d="M2 10 L10.5 2.1 L10.5 6.3 C16 6.3 20.8 10 20.8 15.5 C20.8 19 18 22 14.8 23 L13 20.5 C15.5 19.5 16.8 17.5 16.3 15.5 C15.8 13.6 13.5 13.2 10.5 13.4 L10.5 17.9 Z" fill="url(#gUndo)" stroke="#d0a800" stroke-width="0.9" stroke-linejoin="round"/></svg>
<svg style="left:207px;top:30px" width="26" height="26" viewBox="0 0 26 26"><ellipse cx="12.5" cy="22.3" rx="8" ry="2" fill="#8c8a84" opacity="0.15"/><g transform="translate(24.7,0) scale(-1,1)"><path d="M2 10 L10.5 2.1 L10.5 6.3 C16 6.3 20.8 10 20.8 15.5 C20.8 19 18 22 14.8 23 L13 20.5 C15.5 19.5 16.8 17.5 16.3 15.5 C15.8 13.6 13.5 13.2 10.5 13.4 L10.5 17.9 Z" fill="url(#gRedo)" stroke="#b2e496" stroke-width="0.9" stroke-linejoin="round"/></g></svg>
<svg style="left:250px;top:30px" width="26" height="26" viewBox="0 0 26 26"><path d="M5.1 6.5 V12 M20.6 6.5 V12" stroke="#3c3c3c" stroke-width="1.2"/><path d="M6 2.4 H16.2 L20.3 6.5 V12 H6Z" fill="#f6f6f6" stroke="#b8b8b8" stroke-width="0.8"/><path d="M16.2 2.4 V6.5 H20.3Z" fill="#dcdcdc" stroke="#b0b0b0" stroke-width="0.6"/><rect x="2" y="11.2" width="22.2" height="9.3" rx="1.8" fill="url(#gPrn)" stroke="#8e8e8e" stroke-width="0.9"/><rect x="6.3" y="11.4" width="13.7" height="5.4" fill="url(#gSlot)"/><circle cx="21.6" cy="17.7" r="0.8" fill="#5ee040"/><path d="M3.6 20.5 H22.6 V22.2 Q22.6 23.4 21.4 23.4 H4.8 Q3.6 23.4 3.6 22.2Z" fill="#fff" stroke="#5c5c5c" stroke-width="0.9"/></svg>
<svg style="left:284px;top:30px" width="26" height="26" viewBox="0 0 26 26"><rect x="1.8" y="10.5" width="3.4" height="13" fill="#1e2c52"/><rect x="0.2" y="22.7" width="6.9" height="2.3" rx="0.8" fill="#1e2c52"/><rect x="20.9" y="10.5" width="3.4" height="13" fill="#1e2c52"/><rect x="19.2" y="22.7" width="6.9" height="2.3" rx="0.8" fill="#1e2c52"/><rect x="0.5" y="2.5" width="25.6" height="8.2" rx="1.6" fill="#8c8c54" stroke="#30301c" stroke-width="1"/><rect x="3.3" y="5.6" width="19.6" height="2" fill="#141408"/><path d="M6.8 7 H19.1 V21.5 H11.8 L6.8 16.6Z" fill="#f2f2f2" stroke="#b4b4b4" stroke-width="0.7"/><path d="M6.8 16.6 H11.8 V21.5Z" fill="#d4d4d4" stroke="#aaa" stroke-width="0.5"/><path d="M10 9 V15.8 L16.6 12.4Z M11.4 9.6 V15.2" fill="none" stroke="#c25454" stroke-width="0.8"/></svg>
<svg style="left:327px;top:30px" width="26" height="26" viewBox="0 0 26 26"><path d="M16.8 14.4 L23.5 20.8" stroke="#3c3c3c" stroke-width="2" stroke-linecap="round"/><circle cx="11.4" cy="9.4" r="6.7" fill="none" stroke="#2c2c2c" stroke-width="1.8"/><path d="M7.7 9.4 H15.1 M11.4 5.9 V12.9" stroke="#2c2c2c" stroke-width="2.3"/></svg>
<svg style="left:361px;top:30px" width="26" height="26" viewBox="0 0 26 26"><path d="M16.8 14.4 L23.5 20.8" stroke="#3c3c3c" stroke-width="2" stroke-linecap="round"/><circle cx="11.4" cy="9.4" r="6.7" fill="none" stroke="#2c2c2c" stroke-width="1.8"/><path d="M7.6 9.4 H15.2" stroke="#2c2c2c" stroke-width="2.3"/></svg>
<svg style="left:395px;top:30px" width="26" height="26" viewBox="0 0 26 26"><path d="M11.2 20.1 A6.9 6.9 0 1 1 19.1 12.2" fill="none" stroke="#000" stroke-width="1.9"/><path d="M14.4 13.8 L23.2 10.2 L19.7 18Z" fill="#000"/></svg>
<svg style="left:429px;top:30px" width="26" height="26" viewBox="0 0 26 26"><path d="M17 14.5 L23.5 20.8" stroke="#555" stroke-width="2" stroke-linecap="round"/><circle cx="11.4" cy="9.1" r="6.8" fill="none" stroke="#1c1c1c" stroke-width="1.7"/><path d="M4 11.9 H1.9 V23.3 H4 M10 11.9 H12.2 V23.3 H10" fill="none" stroke="#111" stroke-width="1.5"/></svg>
<svg style="left:472px;top:30px" width="26" height="26" viewBox="0 0 26 26"><rect x="2" y="2.2" width="22.8" height="22.2" fill="#6e6e6e" opacity="0.35"/><rect x="1.4" y="1.4" width="22.4" height="22" fill="#fcfcfc" stroke="#5a5a5a" stroke-width="1"/><path d="M3.6 6 H6 M3.6 12 H6 M3.6 18 H6 M7 19 H14" stroke="#c6c6c6" stroke-width="0.8"/><path d="M18.3 15.3 L24.6 20.2" stroke="#9a9a9a" stroke-width="3.4" stroke-linecap="round"/><path d="M18.3 15.3 L24.6 20.2" stroke="#e4e4e4" stroke-width="2" stroke-linecap="round"/><circle cx="13.3" cy="10.3" r="6.9" fill="#ececec" stroke="#8a8a8a" stroke-width="0.8"/><circle cx="13.3" cy="10.3" r="5.2" fill="url(#gLens)" stroke="#4a82d0" stroke-width="1.1"/></svg>
<svg style="left:515px;top:30px;will-change:opacity" width="26" height="26" viewBox="0 0 26 26"><path d="M0.6 0.5 H18 L25.8 8.2 V25.2 H0.6Z" fill="#ebebe7" stroke="#c4c4c0" stroke-width="0.8"/><path d="M18 0.5 Q18.6 6.6 25.8 8.2Z" fill="#fbfbfb" stroke="#c0c0c0" stroke-width="0.6"/><path d="M4.6 3.9 L20.4 10.9" stroke="#c42828" stroke-width="1.2"/><path d="M15.6 3.3 L7.4 12.4" stroke="#207a28" stroke-width="1.2"/><rect x="0.4" y="14.2" width="25.5" height="11" fill="#1e6e1e"/><text x="13.2" y="23.9" text-anchor="middle" font-family="DejaVu Serif,Liberation Serif,serif" font-weight="bold" font-size="10.4" textLength="23.2" lengthAdjust="spacingAndGlyphs" fill="#fff">NET</text></svg>
<svg style="left:549px;top:30px" width="26" height="26" viewBox="0 0 26 26"><path d="M8.8 5.6 L5.6 1.4 M13.4 5.6 L16.4 1.4 M5 12.4 L1.2 14.6 M5.2 19 L2.2 23.2 M17 19 L20.4 23.2 M17.4 12.4 L20.8 10.8" stroke="#7a7a7a" stroke-width="0.9" fill="none"/><ellipse cx="11" cy="7" rx="4.4" ry="3" fill="#0c0c0c"/><circle cx="8" cy="6.9" r="1.3" fill="#ecc400"/><circle cx="14" cy="6.9" r="1.3" fill="#ecc400"/><ellipse cx="11.1" cy="16" rx="6.8" ry="7.7" fill="url(#gBug)"/><path d="M11.1 9 V23.6" stroke="#700" stroke-width="0.6"/><circle cx="7.4" cy="13" r="1.3" fill="#111"/><circle cx="8.6" cy="17.8" r="1.5" fill="#111"/><circle cx="14.4" cy="18" r="1.5" fill="#111"/><circle cx="7.6" cy="21.6" r="1.1" fill="#111"/><circle cx="14.4" cy="21.6" r="1.1" fill="#111"/><circle cx="11.1" cy="22.6" r="1" fill="#111"/><path d="M9.4 8.6 L15.6 14.8 L23.8 5.4" fill="none" stroke="#1ea030" stroke-width="3.2"/></svg>
<svg style="left:723px;top:31px" width="24" height="24" viewBox="0 0 24 24"><rect width="24" height="24" fill="#008400"/><svg x="0" y="0" width="24" height="24" style="overflow:hidden;position:static"><path d="M22.6 -1.4 L11 11.6 V21.6" fill="none" stroke="#8e0c0c" stroke-width="4.3" stroke-linejoin="miter"/></svg><circle cx="11.7" cy="9.4" r="3.9" fill="none" stroke="#dcd4dc" stroke-width="1.7"/></svg>
<svg style="left:765px;top:30px" width="26" height="26" viewBox="0 0 26 26"><rect x="0.3" y="6" width="23.7" height="14.9" fill="#fff" stroke="#3c3c3c" stroke-width="1.3"/><path d="M0.3 11.5 a2 2 0 0 1 0 4" fill="#ccc" stroke="#666" stroke-width="0.7"/><rect x="3.3" y="2.2" width="4.6" height="6.1" fill="#10c020" stroke="#4a4a4a" stroke-width="0.9"/><rect x="3.3" y="18.6" width="4.6" height="6.1" fill="#10c020" stroke="#4a4a4a" stroke-width="0.9"/><rect x="10.5" y="2.2" width="4.6" height="6.1" fill="#10c020" stroke="#4a4a4a" stroke-width="0.9"/><rect x="10.5" y="18.6" width="4.6" height="6.1" fill="#10c020" stroke="#4a4a4a" stroke-width="0.9"/><rect x="17.5" y="2.2" width="4.6" height="6.1" fill="#10c020" stroke="#4a4a4a" stroke-width="0.9"/><rect x="17.5" y="18.6" width="4.6" height="6.1" fill="#10c020" stroke="#4a4a4a" stroke-width="0.9"/><rect x="10.6" y="2.6" width="4.4" height="5.4" fill="#c8f0c8"/><rect x="10.6" y="19" width="4.4" height="5.4" fill="#c8f0c8"/><path d="M3.6 13.6 H21.4 M12.5 4.4 V22.8" stroke="#333" stroke-width="1.1"/><path d="M5.8 11.2 L3.2 13.6 L5.8 16 M19.2 11.2 L21.8 13.6 L19.2 16 M10.2 6.4 L12.5 3.8 L14.8 6.4 M10.2 20.8 L12.5 23.4 L14.8 20.8" fill="none" stroke="#333" stroke-width="1.1"/></svg>
<svg style="left:799px;top:30px" width="26" height="26" viewBox="0 0 26 26"><path d="M6.5 2.6 V23.5 M17.5 2.6 V23.5" stroke="#e40000" stroke-width="3" stroke-linecap="round"/><path d="M1.7 7.5 H22.4 M1.7 18.5 H22.4" stroke="#00a000" stroke-width="3" stroke-linecap="round"/><circle cx="6.5" cy="7.5" r="2.1" fill="#f4f4f4" stroke="#b4b4b4" stroke-width="0.6"/><circle cx="17.5" cy="18.5" r="2.1" fill="#f4f4f4" stroke="#b4b4b4" stroke-width="0.6"/></svg>
<svg style="left:842px;top:30px" width="26" height="26" viewBox="0 0 26 26"><path d="M11.8 1.6 L23.2 13 L11.8 24.4 L0.4 13Z" fill="#f8b21e" stroke="#111" stroke-width="1.2" stroke-linejoin="round"/><path d="M8.8 11 V18.6 M15.2 7.6 V15.2" stroke="#000" stroke-width="2"/><path d="M8.8 7.4 L5.8 12 H11.8Z M15.2 18.8 L12.2 14.2 H18.2Z" fill="#000"/></svg>
<svg style="left:566px;top:68px" width="26" height="26" viewBox="0 0 26 26"><path d="M1.6 3.4 H9 M24.6 3.4 H17.2 M0.4 22.5 H8.4 M25.8 22.5 H17.8" stroke="#333" stroke-width="1.1"/><path d="M11.6 3.4 L7.2 1.4 V5.4Z M14.6 3.4 L19 1.4 V5.4Z M10.8 22.5 L6.4 20.5 V24.5Z M15.4 22.5 L19.8 20.5 V24.5Z" fill="#333"/><rect x="0" y="11" width="26" height="2.2" fill="#efe8ef"/><path d="M0 9.9 H26" stroke="#e00000" stroke-width="2.1"/><path d="M13 1.2 V5.2 L9.6 9.4" fill="none" stroke="#e00000" stroke-width="2.1" stroke-linecap="round" stroke-linejoin="round"/><path d="M0 15 H26" stroke="#009a00" stroke-width="3.8"/><path d="M17 16 L13 20 V24.6" fill="none" stroke="#009a00" stroke-width="3.8" stroke-linecap="round" stroke-linejoin="round"/></svg>
<svg style="left:7px;top:109px" width="26" height="26" viewBox="0 0 26 26"><path d="M14 5.4 L10.6 0.8 M18.6 5.4 L21.2 0.8 M21.4 9.6 L25.4 10.4 M21.8 16 L25 21 M11.6 8.6 L8.8 6.8 M22.4 12.6 L25.6 13.4" stroke="#222" stroke-width="0.9" fill="none"/><ellipse cx="16.2" cy="5.4" rx="3.8" ry="2.8" fill="#0a0a0a"/><ellipse cx="16.4" cy="12.6" rx="6.6" ry="8.8" fill="#050505"/><ellipse cx="10" cy="23.6" rx="7" ry="1.3" fill="#888" opacity="0.35"/><circle cx="9.7" cy="15.6" r="7.6" fill="#e8d0d4" fill-opacity="0.22" stroke="#d24848" stroke-width="2.4"/><path d="M4.4 20.9 L15 10.3" stroke="#d24848" stroke-width="2.3"/><path d="M4.2 12.2 A7 7 0 0 1 12 9" stroke="#f09090" stroke-width="0.8" fill="none"/></svg>
<svg style="left:7px;top:143px" width="26" height="26" viewBox="0 0 26 26"><circle cx="4" cy="3.9" r="1.5" fill="#1c1c1c"/><circle cx="4" cy="9.9" r="1.5" fill="#1c1c1c"/><circle cx="4" cy="15.9" r="1.5" fill="#1c1c1c"/><circle cx="4" cy="21.9" r="1.5" fill="#1c1c1c"/><circle cx="10" cy="3.9" r="1.5" fill="#1c1c1c"/><circle cx="10" cy="9.9" r="1.5" fill="#1c1c1c"/><circle cx="10" cy="15.9" r="1.5" fill="#1c1c1c"/><circle cx="10" cy="21.9" r="1.5" fill="#1c1c1c"/><circle cx="16" cy="3.9" r="1.5" fill="#1c1c1c"/><circle cx="16" cy="9.9" r="1.5" fill="#1c1c1c"/><circle cx="16" cy="15.9" r="1.5" fill="#1c1c1c"/><circle cx="16" cy="21.9" r="1.5" fill="#1c1c1c"/><circle cx="22.1" cy="3.9" r="1.5" fill="#1c1c1c"/><circle cx="22.1" cy="9.9" r="1.5" fill="#1c1c1c"/><circle cx="22.1" cy="15.9" r="1.5" fill="#1c1c1c"/><circle cx="22.1" cy="21.9" r="1.5" fill="#1c1c1c"/></svg>
<svg style="left:7px;top:177px;will-change:opacity" width="26" height="26" viewBox="0 0 26 26"><path d="M2.5 22.9 L12.5 22.9 A10 10 0 0 0 9.6 15.8Z" fill="#dedede" stroke="#333" stroke-width="0.7"/><path d="M2.5 22.9 L22.7 3.4" stroke="#3c1c1c" stroke-width="1.3"/><path d="M2.5 4 V22.9 H22" stroke="#111" stroke-width="1.3" fill="none"/><path d="M2.5 1.5 L0.4 6.4 H4.6Z M24.4 22.9 L19.6 20.8 V25Z" fill="#111"/><circle cx="22.9" cy="3.3" r="2.3" fill="#ff0000"/><text x="7.4" y="8.4" font-family="DejaVu Sans,sans-serif" font-weight="bold" font-size="11.5" fill="#222">r</text><text x="17" y="16.6" font-family="DejaVu Sans,sans-serif" font-size="10.6" textLength="9.6" lengthAdjust="spacingAndGlyphs" fill="#222" stroke="#222" stroke-width="0.3">φ</text></svg>
<svg style="left:7px;top:211px;will-change:opacity" width="26" height="26" viewBox="0 0 26 26"><text x="12.9" y="13.8" text-anchor="middle" font-family="DejaVu Sans,sans-serif" font-weight="bold" font-size="14.6" textLength="12.6" lengthAdjust="spacingAndGlyphs" fill="#1c1c1c">In</text><path d="M4.2 19.7 H21.9" stroke="#222" stroke-width="1.4"/><path d="M1.2 19.7 L7.6000000000000005 17.2 L6.0 19.7 L7.6000000000000005 22.2Z M24.9 19.7 L18.5 17.2 L20.099999999999998 19.7 L18.5 22.2Z" fill="#222"/></svg>
<svg style="left:7px;top:245px;will-change:opacity" width="26" height="26" viewBox="0 0 26 26"><text x="13.1" y="12.6" text-anchor="middle" font-family="DejaVu Sans,sans-serif" font-weight="bold" font-size="13.6" textLength="24.4" lengthAdjust="spacingAndGlyphs" fill="#1c1c1c">mm</text><path d="M4.2 19.6 H21.9" stroke="#222" stroke-width="1.4"/><path d="M1.2 19.6 L7.6000000000000005 17.1 L6.0 19.6 L7.6000000000000005 22.1Z M24.9 19.6 L18.5 17.1 L20.099999999999998 19.6 L18.5 22.1Z" fill="#222"/></svg>
<svg style="left:7px;top:279px" width="26" height="26" viewBox="0 0 26 26"><path d="M8.9 1.5 V25 M1 8.8 H25" stroke="#858585" stroke-width="1.5"/><path d="M4.3 8.8 H14 M8.9 4.4 V13.8" stroke="#111" stroke-width="2"/><path transform="translate(12.5,11.6) scale(0.72)" d="M0 0 V16.2 L4.3 12.8 L7.7 19.1 L10.7 17.1 L7.7 10.9 L12.8 10.4Z" fill="#f4f4f4" stroke="#505050" stroke-width="1.1" stroke-linejoin="round"/></svg>
<svg style="left:7px;top:322px" width="26" height="26" viewBox="0 0 26 26"><rect x="0" y="0.2" width="26" height="25.4" rx="3" fill="#cdcdcd"/><path d="M5 5.1 L19.4 6.9 L26 7.2 M5 5.1 L20.5 17.8 M6.3 20.5 L19.4 6.9" stroke="#fff" stroke-width="1.8" fill="none"/><ellipse cx="5" cy="5.1" rx="2.7" ry="2.6" fill="#c8e400" stroke="#788c00" stroke-width="0.8"/><ellipse cx="19.4" cy="6.9" rx="2.3" ry="2.8" fill="#c8e400" stroke="#788c00" stroke-width="0.8"/><ellipse cx="20.5" cy="17.8" rx="2.3" ry="2.8" fill="#c8e400" stroke="#788c00" stroke-width="0.8"/><ellipse cx="6.3" cy="20.5" rx="2.5" ry="2.5" fill="#c8e400" stroke="#788c00" stroke-width="0.8"/></svg>
<svg style="left:7px;top:356px" width="26" height="26" viewBox="0 0 26 26"><rect x="0.6" y="0.5" width="25" height="24.8" rx="2.5" fill="#cdcdcd"/><path d="M6.3 7 L1 1.2 M6.3 11 L0.8 9.4 M6.3 15 L0.8 17 M6.3 19.2 L1 25 M19.7 7 L25 1.2 M19.7 11 L25.2 9.4 M19.7 15 L25.2 17 M19.7 19.2 L25 25" stroke="#fff" stroke-width="1.6"/><rect x="5.2" y="6" width="2.2" height="2.1" fill="#e4600c"/><rect x="5.2" y="10" width="2.2" height="2.1" fill="#e4600c"/><rect x="5.2" y="14" width="2.2" height="2.1" fill="#e4600c"/><rect x="5.2" y="18.2" width="2.2" height="2.1" fill="#e4600c"/><rect x="18.6" y="6" width="2.2" height="2.1" fill="#e4600c"/><rect x="18.6" y="10" width="2.2" height="2.1" fill="#e4600c"/><rect x="18.6" y="14" width="2.2" height="2.1" fill="#e4600c"/><rect x="18.6" y="18.2" width="2.2" height="2.1" fill="#e4600c"/><rect x="8.4" y="5.2" width="9.2" height="15.2" fill="#e2e2e2"/><path d="M8.6 5.2 V20.4 M17.4 5.2 V20.4" stroke="#6c6c6c" stroke-width="1.6"/><path d="M8 5.3 H18 M8 20.3 H18" stroke="#111" stroke-width="1"/><rect x="11.4" y="5.4" width="3.2" height="2.2" fill="#fff" stroke="#222" stroke-width="0.8"/></svg>
<svg style="left:7px;top:399px" width="26" height="26" viewBox="0 0 26 26"><path d="M3.2 6.3 H22.7" stroke="#a2a2a2" stroke-width="2"/><path d="M0.9 6.3 H3.2 V17.1 L7.3 21.2 H18.6 L22.7 17.1 V6.3 H25" fill="none" stroke="#008200" stroke-width="2.9" stroke-linecap="round" stroke-linejoin="round"/><path d="M8.6 2.4 L17.4 11.2 M17.4 2.4 L8.6 11.2" stroke="#e00000" stroke-width="3" stroke-linecap="round"/></svg>
<svg style="left:7px;top:442px" width="26" height="26" viewBox="0 0 26 26"><rect x="0.5" y="0.5" width="25" height="25" fill="#58a458" stroke="#148414" stroke-width="1"/><circle cx="8.9" cy="10.4" r="5.9" fill="#58a458" stroke="#f2faf2" stroke-width="1.2"/><path d="M12.4 10 H18.6 L23.5 22.6" fill="none" stroke="#f2faf2" stroke-width="5.2" stroke-linecap="round" stroke-linejoin="round"/><circle cx="8.9" cy="10.4" r="5.2" fill="#58a458"/><path d="M12.4 10 H18.6 L23.5 22.6" fill="none" stroke="#008200" stroke-width="3" stroke-linecap="round" stroke-linejoin="round"/><circle cx="8.9" cy="10.4" r="3.5" fill="none" stroke="#008200" stroke-width="2.8"/><circle cx="8.9" cy="10.4" r="2" fill="#d4e4d4"/></svg>
<svg style="left:7px;top:476px" width="26" height="26" viewBox="0 0 26 26"><rect x="0.7" y="0.7" width="24.8" height="24.6" fill="none" stroke="#28a028" stroke-width="1.2"/><path d="M12.4 10 H18.6 L23.5 22.6" fill="none" stroke="#008200" stroke-width="3" stroke-linecap="round" stroke-linejoin="round"/><circle cx="8.9" cy="10.4" r="3.5" fill="none" stroke="#008200" stroke-width="2.8"/><circle cx="8.9" cy="10.4" r="2" fill="#dde3ea"/></svg>
<svg style="left:7px;top:510px" width="26" height="26" viewBox="0 0 26 26"><rect x="0.7" y="0.7" width="24.8" height="24.6" fill="none" stroke="#28a028" stroke-width="1.2"/><circle cx="8.9" cy="10.4" r="7" fill="none" stroke="#148414" stroke-width="1"/><path d="M12.4 10 H18.6 L23.5 22.6" fill="none" stroke="#148414" stroke-width="6" stroke-linecap="round" stroke-linejoin="miter"/><path d="M12.4 10 H18.6 L23.5 22.6" fill="none" stroke="#d5d3ce" stroke-width="4.4" stroke-linecap="round" stroke-linejoin="miter"/><circle cx="8.9" cy="10.4" r="6.4" fill="#d5d3ce"/><path d="M12.4 10 H18.6 L23.5 22.6" fill="none" stroke="#008200" stroke-width="3" stroke-linecap="round" stroke-linejoin="round"/><circle cx="8.9" cy="10.4" r="3.5" fill="none" stroke="#008200" stroke-width="2.8"/><circle cx="8.9" cy="10.4" r="2" fill="#e4e4e0"/></svg>
<svg style="left:7px;top:553px" width="26" height="26" viewBox="0 0 26 26"><path d="M6.8 19.2 A8.6 8.6 0 0 1 19.2 6.8Z" fill="#3fa03f"/><circle cx="13" cy="13" r="8.4" fill="none" stroke="#0a820a" stroke-width="1.3"/><circle cx="13" cy="13" r="4.3" fill="none" stroke="#0a820a" stroke-width="1.6"/><circle cx="13" cy="13" r="2.3" fill="#d0d0d0"/><path d="M1 25 L25 1" stroke="#a0a0a0" stroke-width="0.9"/></svg>
<svg style="left:7px;top:587px" width="26" height="26" viewBox="0 0 26 26"><path d="M0 0 H4.5 L10.6 6.1 L6.4 10.4 L0 4.5Z" fill="#0aa00e"/><path d="M25.9 25.6 H21.4 L10.6 15.2 L15 10.9 L25.9 21.4Z" fill="#e00000"/><path d="M8.2 17.6 A6.6 6.6 0 0 1 17.6 8.2 L16.6 12.4 L11.4 15.6Z" fill="#bebebe"/><path d="M12.4 16 A2.6 2.6 0 0 0 16 12.4Z" fill="#b4c020"/><circle cx="12.9" cy="12.9" r="6.3" fill="none" stroke="#484848" stroke-width="1.5"/><path d="M1.2 24.4 L24.6 1.2" stroke="#aeaeae" stroke-width="1.2"/></svg>
<svg style="left:7px;top:621px" width="26" height="26" viewBox="0 0 26 26"><path d="M6.9 0.2 H12.9 V12.9 L6.9 18.8Z" fill="#e00000"/><rect x="0.1" y="13.3" width="6.8" height="5.6" fill="#0a8a0a"/><path d="M13.2 13.5 H26 M8 18.6 H26" stroke="#0a8a0a" stroke-width="1.1"/><path d="M7.4 18.6 V26 M12.4 14 V26" stroke="#e00000" stroke-width="1.1"/><path d="M1 24.5 L25 1" stroke="#8c8c8c" stroke-width="1.1"/></svg>
<svg style="left:1135px;top:109px" width="26" height="26" viewBox="0 0 26 26"><path transform="translate(6.3,3.6) scale(1.0)" d="M0 0 V16.2 L4.3 12.8 L7.7 19.1 L10.7 17.1 L7.7 10.9 L12.8 10.4Z" fill="#f4f4f4" stroke="#505050" stroke-width="1.1" stroke-linejoin="round"/></svg>
<svg style="left:1135px;top:152px" width="26" height="26" viewBox="0 0 26 26"><path d="M18.6 2.4 V23.5 M2.2 18.4 H23.8" stroke="#929292" stroke-width="2.3" stroke-linecap="round"/><path d="M7.5 2.6 V23.3" stroke="#ff0000" stroke-width="3" stroke-linecap="round"/><path d="M2.6 7.3 H23.4" stroke="#00c000" stroke-width="3" stroke-linecap="round"/><circle cx="7.5" cy="7.3" r="2" fill="#f2f2f2" stroke="#b0b0b0" stroke-width="0.6"/><path transform="translate(12.5,7.8) scale(0.8)" d="M0 0 V16.2 L4.3 12.8 L7.7 19.1 L10.7 17.1 L7.7 10.9 L12.8 10.4Z" fill="#f4f4f4" stroke="#505050" stroke-width="1.1" stroke-linejoin="round"/></svg>
<svg style="left:1135px;top:186px" width="26" height="26" viewBox="0 0 26 26"><rect x="0" y="0.2" width="26" height="25.4" rx="3" fill="#c1c1c1"/><path d="M9.9 8.7 L6.3 0.6 M9.9 8.7 L26 3.5 M9.9 8.7 L0.4 10.7 M9.9 8.7 L26 14.3 M9.9 8.7 L1.8 25" stroke="#fff" stroke-width="1.8"/><ellipse cx="9.9" cy="8.7" rx="2.6" ry="2.6" fill="#c8e400" stroke="#788c00" stroke-width="0.8"/><path transform="translate(10.6,10.2) scale(0.8)" d="M0 0 V16.2 L4.3 12.8 L7.7 19.1 L10.7 17.1 L7.7 10.9 L12.8 10.4Z" fill="#f4f4f4" stroke="#505050" stroke-width="1.1" stroke-linejoin="round"/></svg>
<svg style="left:1135px;top:230px" width="26" height="26" viewBox="0 0 26 26"><rect x="1.2" y="5.3" width="23.6" height="14.4" fill="#fff" stroke="#3c3c3c" stroke-width="1.3"/><path d="M1.2 10.6 a2 2 0 0 1 0 4" fill="#ccc" stroke="#666" stroke-width="0.7"/><rect x="4.3" y="1.3" width="4.5" height="6" fill="#10c020" stroke="#4a4a4a" stroke-width="0.9"/><rect x="4.3" y="17.7" width="4.5" height="6" fill="#10c020" stroke="#4a4a4a" stroke-width="0.9"/><rect x="11.3" y="1.3" width="4.5" height="6" fill="#10c020" stroke="#4a4a4a" stroke-width="0.9"/><rect x="11.3" y="17.7" width="4.5" height="6" fill="#10c020" stroke="#4a4a4a" stroke-width="0.9"/><rect x="18.4" y="1.3" width="4.5" height="6" fill="#10c020" stroke="#4a4a4a" stroke-width="0.9"/><rect x="18.4" y="17.7" width="4.5" height="6" fill="#10c020" stroke="#4a4a4a" stroke-width="0.9"/></svg>
<svg style="left:1135px;top:263px" width="26" height="26" viewBox="0 0 26 26"><path d="M2.4 2.2 L7.3 12.8 H19.1 L23.7 23.5" fill="none" stroke="#008200" stroke-width="3.2" stroke-linecap="round" stroke-linejoin="round"/></svg>
<svg style="left:1135px;top:297px" width="26" height="26" viewBox="0 0 26 26"><rect x="0.5" y="0.5" width="25" height="25" fill="#58a458" stroke="#148414" stroke-width="1"/><path d="M12.4 10 H18.6 L23.5 23" fill="none" stroke="#0a820a" stroke-width="5.2" stroke-linecap="round" stroke-linejoin="round"/><circle cx="8.9" cy="10.4" r="6.3" fill="#0a820a"/><path d="M12.4 10 H18.6 L23.5 23" fill="none" stroke="#848484" stroke-width="3.4" stroke-linecap="round" stroke-linejoin="round"/><circle cx="8.9" cy="10.4" r="3.8" fill="none" stroke="#848484" stroke-width="3.2"/><circle cx="8.9" cy="10.4" r="2.1" fill="#dcdcdc"/></svg>
<svg style="left:1135px;top:331px" width="26" height="26" viewBox="0 0 26 26"><defs><pattern id="hatch" width="3" height="3" patternUnits="userSpaceOnUse" patternTransform="rotate(-45)"><rect width="3" height="3" fill="#f4f8f4"/><rect width="3" height="1.5" fill="#1c901c"/></pattern></defs><rect x="0.6" y="0.6" width="24.8" height="24.8" fill="url(#hatch)" stroke="#148414" stroke-width="1.2"/><rect x="3.6" y="3.6" width="18.8" height="18.8" fill="#e6e6e6"/><circle cx="13" cy="13" r="6.7" fill="#f0dede" stroke="#de4040" stroke-width="2.5"/><path d="M8.4 17.6 L17.6 8.4" stroke="#de4040" stroke-width="2.5"/></svg>
<svg style="left:1135px;top:374px" width="26" height="26" viewBox="0 0 26 26"><path d="M1.7 23.8 L24.8 1.7" stroke="#0000e0" stroke-width="2.7" stroke-dasharray="4.5 2.4"/></svg>
<svg style="left:1135px;top:408px" width="26" height="26" viewBox="0 0 26 26"><circle cx="13" cy="13.1" r="10.5" fill="none" stroke="#0000cc" stroke-width="1.7"/><circle cx="13" cy="13.1" r="2.4" fill="#1eb432" stroke="#7c8c7c" stroke-width="0.7"/><circle cx="20.5" cy="5.4" r="2.4" fill="#1eb432" stroke="#7c8c7c" stroke-width="0.7"/></svg>
<svg style="left:1135px;top:442px" width="26" height="26" viewBox="0 0 26 26"><path d="M4 4 A18 18 0 0 1 22 21.9" fill="none" stroke="#0000cc" stroke-width="2.2"/><circle cx="4" cy="4" r="2.4" fill="#1eb432" stroke="#7c8c7c" stroke-width="0.7"/><circle cx="4" cy="21.9" r="2.4" fill="#1eb432" stroke="#7c8c7c" stroke-width="0.7"/><circle cx="22" cy="21.9" r="2.4" fill="#1eb432" stroke="#7c8c7c" stroke-width="0.7"/></svg>
<svg style="left:1135px;top:476px;will-change:opacity" width="26" height="26" viewBox="0 0 26 26"><text x="13.1" y="22.7" text-anchor="middle" font-family="Liberation Serif,DejaVu Serif,serif" font-size="29.5" fill="#111" stroke="#111" stroke-width="0.7">T</text></svg>
<svg style="left:1135px;top:518px;will-change:opacity" width="26" height="26" viewBox="0 0 26 26"><text x="13.4" y="11.4" text-anchor="middle" font-family="DejaVu Sans,sans-serif" font-size="12" fill="#1c1c1c" stroke="#1c1c1c" stroke-width="0.35">N</text><path d="M2 11.4 V25.7 M24 11.4 V25.7" stroke="#1c1c1c" stroke-width="1.8"/><path d="M6 16.7 H20" stroke="#111" stroke-width="1"/><path d="M3 16.7 L8.4 14.6 V18.8Z M23 16.7 L17.6 14.6 V18.8Z" fill="#111"/></svg>
<svg style="left:1135px;top:552px" width="26" height="26" viewBox="0 0 26 26"><circle cx="13" cy="13.4" r="7.4" fill="#0c0c0c"/><path d="M13 13.4 L6.3999999999999995 13.4 A6.6000000000000005 6.6000000000000005 0 0 1 13 6.8Z M13 13.4 L19.599999999999998 13.4 A6.6000000000000005 6.6000000000000005 0 0 1 13 20.0Z" fill="#dcdc00"/><path d="M2.1999999999999993 13.4 H23.8 M13 2.5999999999999996 V24.200000000000003" stroke="#1a1a1a" stroke-width="1"/></svg>
<svg style="left:1135px;top:596px" width="26" height="26" viewBox="0 0 26 26"><ellipse cx="13.2" cy="23" rx="8" ry="1.8" fill="#8c8a84" opacity="0.4"/><path d="M5 8.6 L6.4 21.6 Q6.6 23.2 13.1 23.2 Q19.6 23.2 19.8 21.6 L21.2 8.6Z" fill="url(#gCan)" stroke="#8a8a8a" stroke-width="0.8"/><path d="M8.4 11 L9 21.4 M11.5 11.4 L11.7 21.8 M14.7 11.4 L14.5 21.8 M17.8 11 L17.2 21.4" stroke="#8e8e8e" stroke-width="0.9"/><ellipse cx="13.1" cy="7.4" rx="8.8" ry="3.4" fill="#d2d2d2" stroke="#7e7e7e" stroke-width="0.9"/><ellipse cx="13.1" cy="6.4" rx="6.6" ry="2.1" fill="#e8e8e8"/><ellipse cx="13.1" cy="4" rx="2.4" ry="1.3" fill="#d4d4d4" stroke="#808080" stroke-width="0.8"/></svg>
<svg style="left:1135px;top:639px" width="26" height="26" viewBox="0 0 26 26"><circle cx="14.4" cy="11.2" r="6" fill="#0c0c0c"/><path d="M14.4 11.2 L9.200000000000001 11.2 A5.2 5.2 0 0 1 14.4 5.999999999999999Z M14.4 11.2 L19.599999999999998 11.2 A5.2 5.2 0 0 1 14.4 16.4Z" fill="#dcdc00"/><path d="M5.800000000000001 11.2 H23.0 M14.4 2.5999999999999996 V19.799999999999997" stroke="#1a1a1a" stroke-width="1"/><path d="M3.4 3.6 V25.8 M0 22.3 H22" stroke="#111" stroke-width="1.2"/><path d="M3.4 0.8 L1.3 5.8 H5.5Z M24.8 22.3 L19.8 20.2 V24.4Z" fill="#111"/></svg>
</body></html>
